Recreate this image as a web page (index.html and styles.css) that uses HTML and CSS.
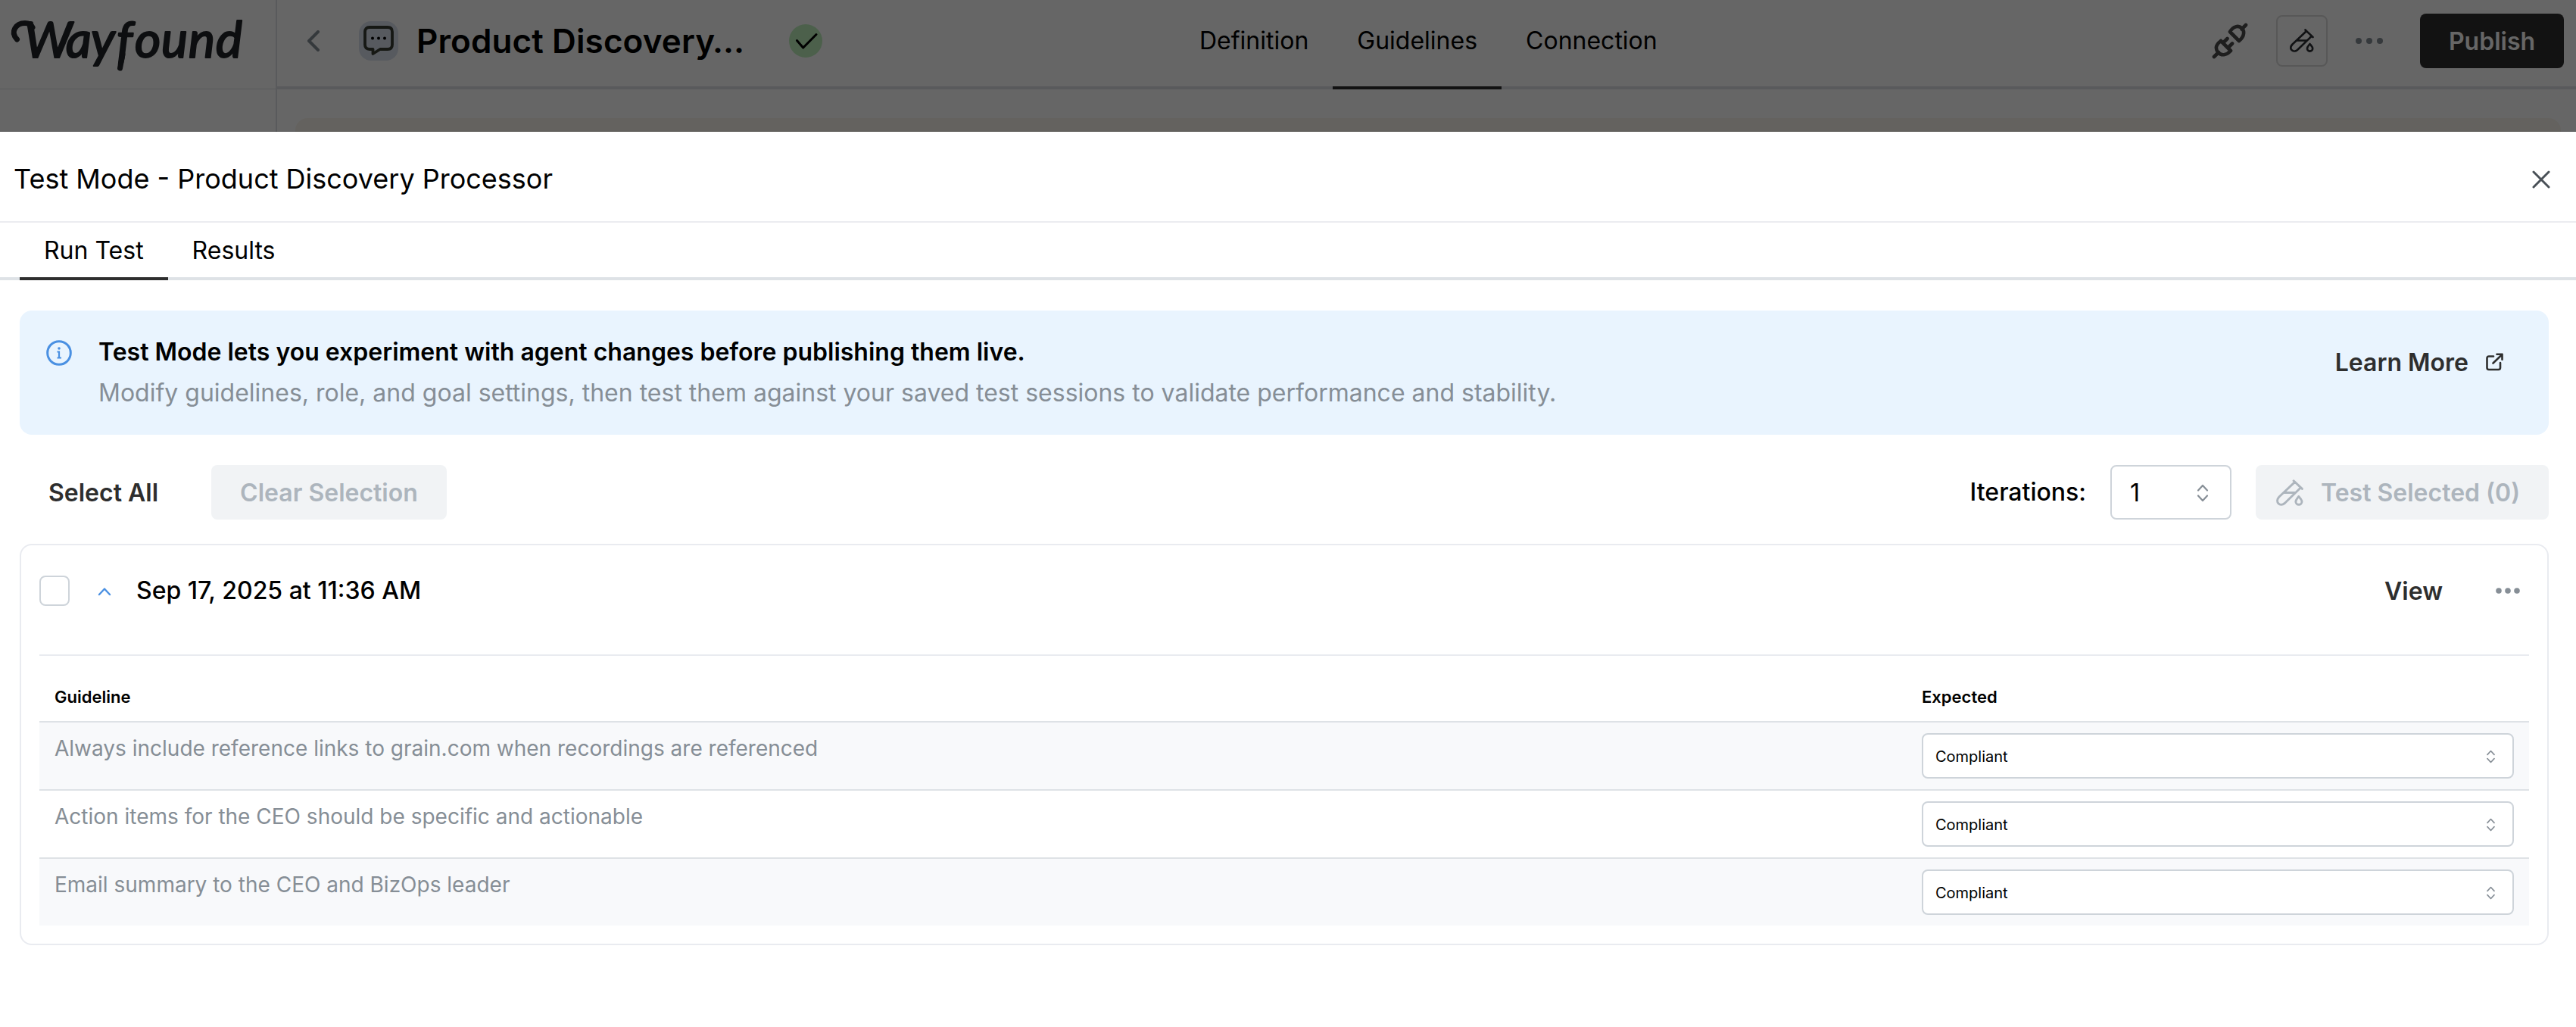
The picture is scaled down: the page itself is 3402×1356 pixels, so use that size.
FILE: index.html
```
<!DOCTYPE html>
<html lang="en">
<head>
<meta charset="utf-8">
<title>Test Mode - Product Discovery Processor</title>
<link rel="stylesheet" href="styles.css">
</head>
<body>
<div class="app">
  <aside class="sidebar">
    <div class="brand">
      <svg class="logo" width="320" height="100" viewBox="0 0 320 100" role="img" aria-label="Wayfound">
        <path class="swash" d="M18.500 52C9 42 17 30.500 29 30.500C34 30.500 37 32 39 36"/>
        <path class="swash" d="M158 72L154.500 90"/>
        <text class="logo-text" x="28 83 116 150 174 209 245 281" y="76">Wayfound</text>
      </svg>
    </div>
  </aside>
  <div class="workspace">
    <header class="topbar">
      <div class="agent">
        <svg class="back" width="16" height="28" viewBox="0 0 16 28"><path d="M14 2L2 14L14 26"/></svg>
        <span class="agent-icon">
          <svg width="40" height="40" viewBox="0 0 40 40"><path d="M8 2H32Q38 2 38 8V25Q38 31 32 31H22L12.500 37V31H8Q2 31 2 25V8Q2 2 8 2Z" fill="none" stroke="#373c34" stroke-width="3.800" stroke-linejoin="round"/><circle cx="12" cy="16.500" r="2"/><circle cx="20" cy="16.500" r="2"/><circle cx="28" cy="16.500" r="2"/></svg>
        </span>
        <h1 class="agent-name">Product Discovery…</h1>
        <svg class="status" width="44" height="44" viewBox="0 0 44 44"><circle cx="22" cy="22" r="22" fill="#bdf0bb"/><path d="M10.500 21.500L18.700 31L36 13.500" fill="none" stroke="#000" stroke-width="3" stroke-linecap="round" stroke-linejoin="round"/></svg>
      </div>
      <nav class="nav">
        <a class="nav-tab">Definition</a>
        <a class="nav-tab nav-tab-active">Guidelines</a>
        <a class="nav-tab">Connection</a>
      </nav>
      <div class="actions">
        <svg class="plug" width="48" height="48" viewBox="0 0 48 48"><path d="M45 3L39.500 8.500M24 12L36 24C44 17.500 43 10 39.500 7C35 3 28 5 24 12ZM3 45L9 39M12 24L25 37M12 24C4 30 5 35 8.500 39.500C12.500 43.500 19 43.500 25 37M15.500 26L20.500 21M22 32.500L27 27.500"/></svg>
        <button class="icon-button"><svg class="tube" width="32" height="32" viewBox="0 0 32 32"><path d="M20.500 1.500L30.500 11M22 3L3.500 20.500C-2 26.500 4.500 32.500 10 28L28 10.500M10 15.500H22M26.500 20C24.500 22.500 23 24 23 26A3.600 3.600 0 0 0 30.200 26C30.200 24 28.500 22.500 26.500 20Z"/></svg></button>
        <svg class="dots dots-top" width="38" height="10" viewBox="0 0 38 10"><circle cx="5" cy="5" r="4"/><circle cx="19" cy="5" r="4"/><circle cx="33" cy="5" r="4"/></svg>
        <button class="publish">Publish</button>
      </div>
    </header>
    <div class="canvas"></div>
  </div>
</div>

<section class="modal">
  <header class="modal-head">
    <h2 class="modal-title">Test Mode - Product Discovery Processor</h2>
    <svg class="close" width="24" height="24" viewBox="0 0 24 24"><path d="M2 2L22 22M22 2L2 22"/></svg>
  </header>
  <div class="tabs">
    <a class="tab tab-active">Run Test</a>
    <a class="tab">Results</a>
  </div>
  <main class="content">
    <div class="banner">
      <svg class="info" width="34" height="34" viewBox="0 0 34 34"><circle cx="17" cy="17" r="15.300"/><path d="M14.500 15.500H17V23M14.500 23.500H20"/><circle class="info-dot" cx="17" cy="11" r="1.800"/></svg>
      <div class="banner-copy">
        <strong class="banner-title">Test Mode lets you experiment with agent changes before publishing them live.</strong>
        <span class="banner-text">Modify guidelines, role, and goal settings, then test them against your saved test sessions to validate performance and stability.</span>
      </div>
      <a class="learn">Learn More
        <svg width="24" height="24" viewBox="0 0 24 24"><path d="M11 4.500H5Q2.500 4.500 2.500 7V19.500Q2.500 22 5 22H17.500Q20 22 20 19.500V13M10.500 13.500L22.500 2M15.500 1.800H22.500V8.800"/></svg>
      </a>
    </div>

    <div class="toolbar">
      <button class="button button-plain">Select All</button>
      <button class="button button-disabled">Clear Selection</button>
      <label class="iterations">Iterations:</label>
      <div class="count"><span>1</span><svg class="updown" width="16" height="24" viewBox="0 0 16 24"><path d="M2 8.500L8 2L14 8.500M2 15.500L8 22L14 15.500"/></svg></div>
      <button class="button button-disabled button-test"><svg class="tube" width="36" height="36" viewBox="0 0 32 32"><path d="M20.500 1.500L30.500 11M22 3L3.500 20.500C-2 26.500 4.500 32.500 10 28L28 10.500M10 15.500H22M26.500 20C24.500 22.500 23 24 23 26A3.600 3.600 0 0 0 30.200 26C30.200 24 28.500 22.500 26.500 20Z"/></svg><span>Test Selected (0)</span></button>
    </div>

    <article class="card">
      <div class="card-head">
        <span class="checkbox"></span>
        <svg class="caret" width="18" height="12" viewBox="0 0 18 12"><path d="M2 10L9 2.500L16 10"/></svg>
        <span class="date">Sep 17, 2025 at 11:36 AM</span>
        <a class="view">View</a>
        <svg class="dots" width="32" height="8" viewBox="0 0 32 8"><circle cx="4" cy="4" r="3.800"/><circle cx="16" cy="4" r="3.800"/><circle cx="28" cy="4" r="3.800"/></svg>
      </div>
      <div class="table">
        <div class="row row-head"><span>Guideline</span><span>Expected</span></div>
        <div class="row row-shaded"><span class="rule">Always include reference links to grain.com when recordings are referenced</span>
          <div class="select"><span>Compliant</span><svg class="updown" width="13" height="18" viewBox="0 0 16 24"><path d="M2 8.500L8 2L14 8.500M2 15.500L8 22L14 15.500"/></svg></div></div>
        <div class="row"><span class="rule">Action items for the CEO should be specific and actionable</span>
          <div class="select"><span>Compliant</span><svg class="updown" width="13" height="18" viewBox="0 0 16 24"><path d="M2 8.500L8 2L14 8.500M2 15.500L8 22L14 15.500"/></svg></div></div>
        <div class="row row-shaded"><span class="rule">Email summary to the CEO and BizOps leader</span>
          <div class="select"><span>Compliant</span><svg class="updown" width="13" height="18" viewBox="0 0 16 24"><path d="M2 8.500L8 2L14 8.500M2 15.500L8 22L14 15.500"/></svg></div></div>
      </div>
    </article>
  </main>
</section>
</body>
</html>
```
FILE: styles.css
```
* { box-sizing: border-box; }

body {
  margin: 0;
  min-height: 1356px;
  background: #fff;
  color: #000;
  font-family: Inter, "Liberation Sans", sans-serif;
  font-size: 32px;
  line-height: 48px;
}

h1, h2 { margin: 0; }
button { border: 0; padding: 0; background: none; font: inherit; color: inherit; }
svg { display: block; flex: none; }

/* Application header, dimmed behind the dialog */
.app {
  position: relative;
  display: flex;
  height: 174px;
  overflow: hidden;
}
.app::after {
  content: "";
  position: absolute;
  inset: 0;
  background: rgba(0, 0, 0, 0.6);
}
.sidebar {
  width: 366px;
  flex: none;
  border-right: 2px solid #dee2e6;
}
.brand { height: 118px; border-bottom: 1px solid #dee2e6; }
.logo { margin-left: 4px; }
.logo-text {
  font: italic 400 66px Lato, sans-serif;
  fill: #212529;
  stroke: #212529;
  stroke-width: 2.2px;
  stroke-linejoin: round;
}
.swash { fill: none; stroke: #212529; stroke-width: 7; stroke-linecap: round; }
.workspace { flex: 1; }
.topbar {
  display: grid;
  grid-template-columns: 1186px auto 1fr;
  height: 118px;
  box-shadow: inset 0 -4px #dee2e6;
}
.agent { display: flex; align-items: center; height: 108px; padding-left: 40px; }
.back { fill: none; stroke: #868e96; stroke-width: 4; stroke-linecap: round; stroke-linejoin: round; }
.agent-icon {
  display: flex;
  align-items: center;
  justify-content: center;
  width: 52px;
  height: 52px;
  margin-left: 52px;
  border-radius: 16px;
  background: #dae1ee;
}
.agent-name {
  width: 468px;
  margin: 0 24px 0 24px;
  font-size: 44px;
  font-weight: 600;
  line-height: 60px;
  letter-spacing: 0.1px;
  white-space: nowrap;
}
.nav { display: flex; }
.nav-tab {
  height: 118px;
  padding: 0 32px;
  border-bottom: 4px solid transparent;
  line-height: 107px;
}
.nav-tab-active { border-color: #2e2e2e; }
.actions {
  display: flex;
  align-items: center;
  justify-content: flex-end;
  height: 108px;
  padding-right: 16px;
}
.plug { fill: none; stroke: #4b4b4b; stroke-width: 4.6; stroke-linecap: round; stroke-linejoin: round; }
.icon-button {
  display: flex;
  align-items: center;
  justify-content: center;
  width: 68px;
  height: 68px;
  margin-left: 37px;
  border: 2px solid #dcdcdc;
  border-radius: 8px;
  color: #2b2e33;
}
.tube { fill: none; stroke: currentColor; stroke-width: 2.6; stroke-linecap: round; stroke-linejoin: round; }
.dots { fill: #868e96; }
.dots-top { margin-left: 36px; }
.publish {
  width: 190px;
  height: 72px;
  padding-top: 1px;
  margin-left: 48px;
  border-radius: 8px;
  background: #2e2e2e;
  color: #fff;
  font-weight: 600;
}
.canvas {
  height: 80px;
  margin: 38px 20px 0 24px;
  border-radius: 16px;
  background: #fbf6ee;
}

/* Dialog */
.modal { position: relative; background: #fff; box-shadow: 0 -1px 1px rgba(0, 0, 0, 0.06); }
.modal-head {
  display: flex;
  align-items: center;
  justify-content: space-between;
  height: 120px;
  padding: 7px 34px 0 18px;
  border-bottom: 2px solid #ebecf0;
}
.modal-title { margin-bottom: 2px; font-size: 36px; font-weight: 400; }
.close { fill: none; stroke: #495057; stroke-width: 3; stroke-linecap: round; }
.tabs {
  display: flex;
  height: 76px;
  padding-left: 26px;
  box-shadow: inset 0 -4px #dee2e6;
}
.tab { padding: 0 32px; border-bottom: 4px solid transparent; line-height: 73px; }
.tab-active { border-color: #2e2e2e; }
.content { padding: 40px 36px 0 26px; }

.banner {
  display: flex;
  height: 164px;
  padding: 28px 60px 0 35px;
  border-radius: 16px;
  background: #e9f4fe;
}
.info { margin-top: 11px; fill: none; stroke: #4a90e2; stroke-width: 3; }
.info path { stroke-width: 2.2; }
.info .info-dot { fill: #4a90e2; stroke: none; }
.banner-copy { display: flex; flex-direction: column; flex: 1; margin-left: 35px; }
.banner-title { font-weight: 600; line-height: 54px; }
.banner-text { color: #868e96; line-height: 54px; }
.learn { display: flex; align-items: center; gap: 22px; height: 82px; color: #2e2e2e; font-weight: 600; }
.learn svg { margin-bottom: 2px; fill: none; stroke: #2e2e2e; stroke-width: 2.6; stroke-linecap: round; stroke-linejoin: round; }

.toolbar { display: flex; align-items: center; height: 72px; margin-top: 40px; }
.button { height: 72px; padding: 1px 38px 0; border-radius: 8px; font-weight: 600; }
.button-plain { color: #2e2e2e; }
.button-disabled { background: #f1f3f5; color: #adb5bd; margin-left: 32px; }
.iterations { margin-left: auto; font-weight: 500; }
.count {
  display: flex;
  align-items: center;
  justify-content: space-between;
  width: 160px;
  height: 72px;
  margin-left: 32px;
  padding: 1px 28px 0 24px;
  border: 2px solid #ced4da;
  border-radius: 8px;
}
.updown { fill: none; stroke: #868e96; stroke-width: 2.2; stroke-linecap: round; stroke-linejoin: round; }
.button-test { display: flex; align-items: center; width: 387px; padding: 1px 0 0 27px; gap: 23px; }

.card {
  height: 530px;
  margin-top: 32px;
  padding: 0 24px;
  border: 2px solid #e9ebf0;
  border-radius: 16px;
}
.card-head { display: flex; align-items: center; height: 120px; }
.checkbox { width: 40px; height: 40px; border: 2px solid #ced4da; border-radius: 8px; }
.caret { margin: 2px 0 0 37px; fill: none; stroke: #4a90e2; stroke-width: 2.4; stroke-linecap: round; stroke-linejoin: round; }
.date { margin-left: 33px; font-weight: 500; }
.view { margin: 2px 0 0 auto; color: #2e2e2e; font-weight: 600; }
.card-head .dots { margin: 0 12px 0 70px; }

.table { margin-top: 24px; border-top: 2px solid #e9ebf0; }
.row {
  display: grid;
  grid-template-columns: 2466px 782px;
  height: 90px;
  padding: 14px 20px 0;
  border-bottom: 2px solid #dee2e6;
}
.row:last-child { height: 88px; border-bottom: 0; }
.row-head { height: 88px; padding-top: 29px; font-size: 22px; font-weight: 600; line-height: 50px; }
.row-shaded { background: #f8f9fb; }
.rule { color: #868e96; font-size: 28px; line-height: 40px; }
.select {
  display: flex;
  align-items: center;
  justify-content: space-between;
  height: 60px;
  padding: 1px 22px 0 16px;
  border: 2px solid #ced4da;
  border-radius: 8px;
  background: #fff;
  font-size: 20px;
}
```
